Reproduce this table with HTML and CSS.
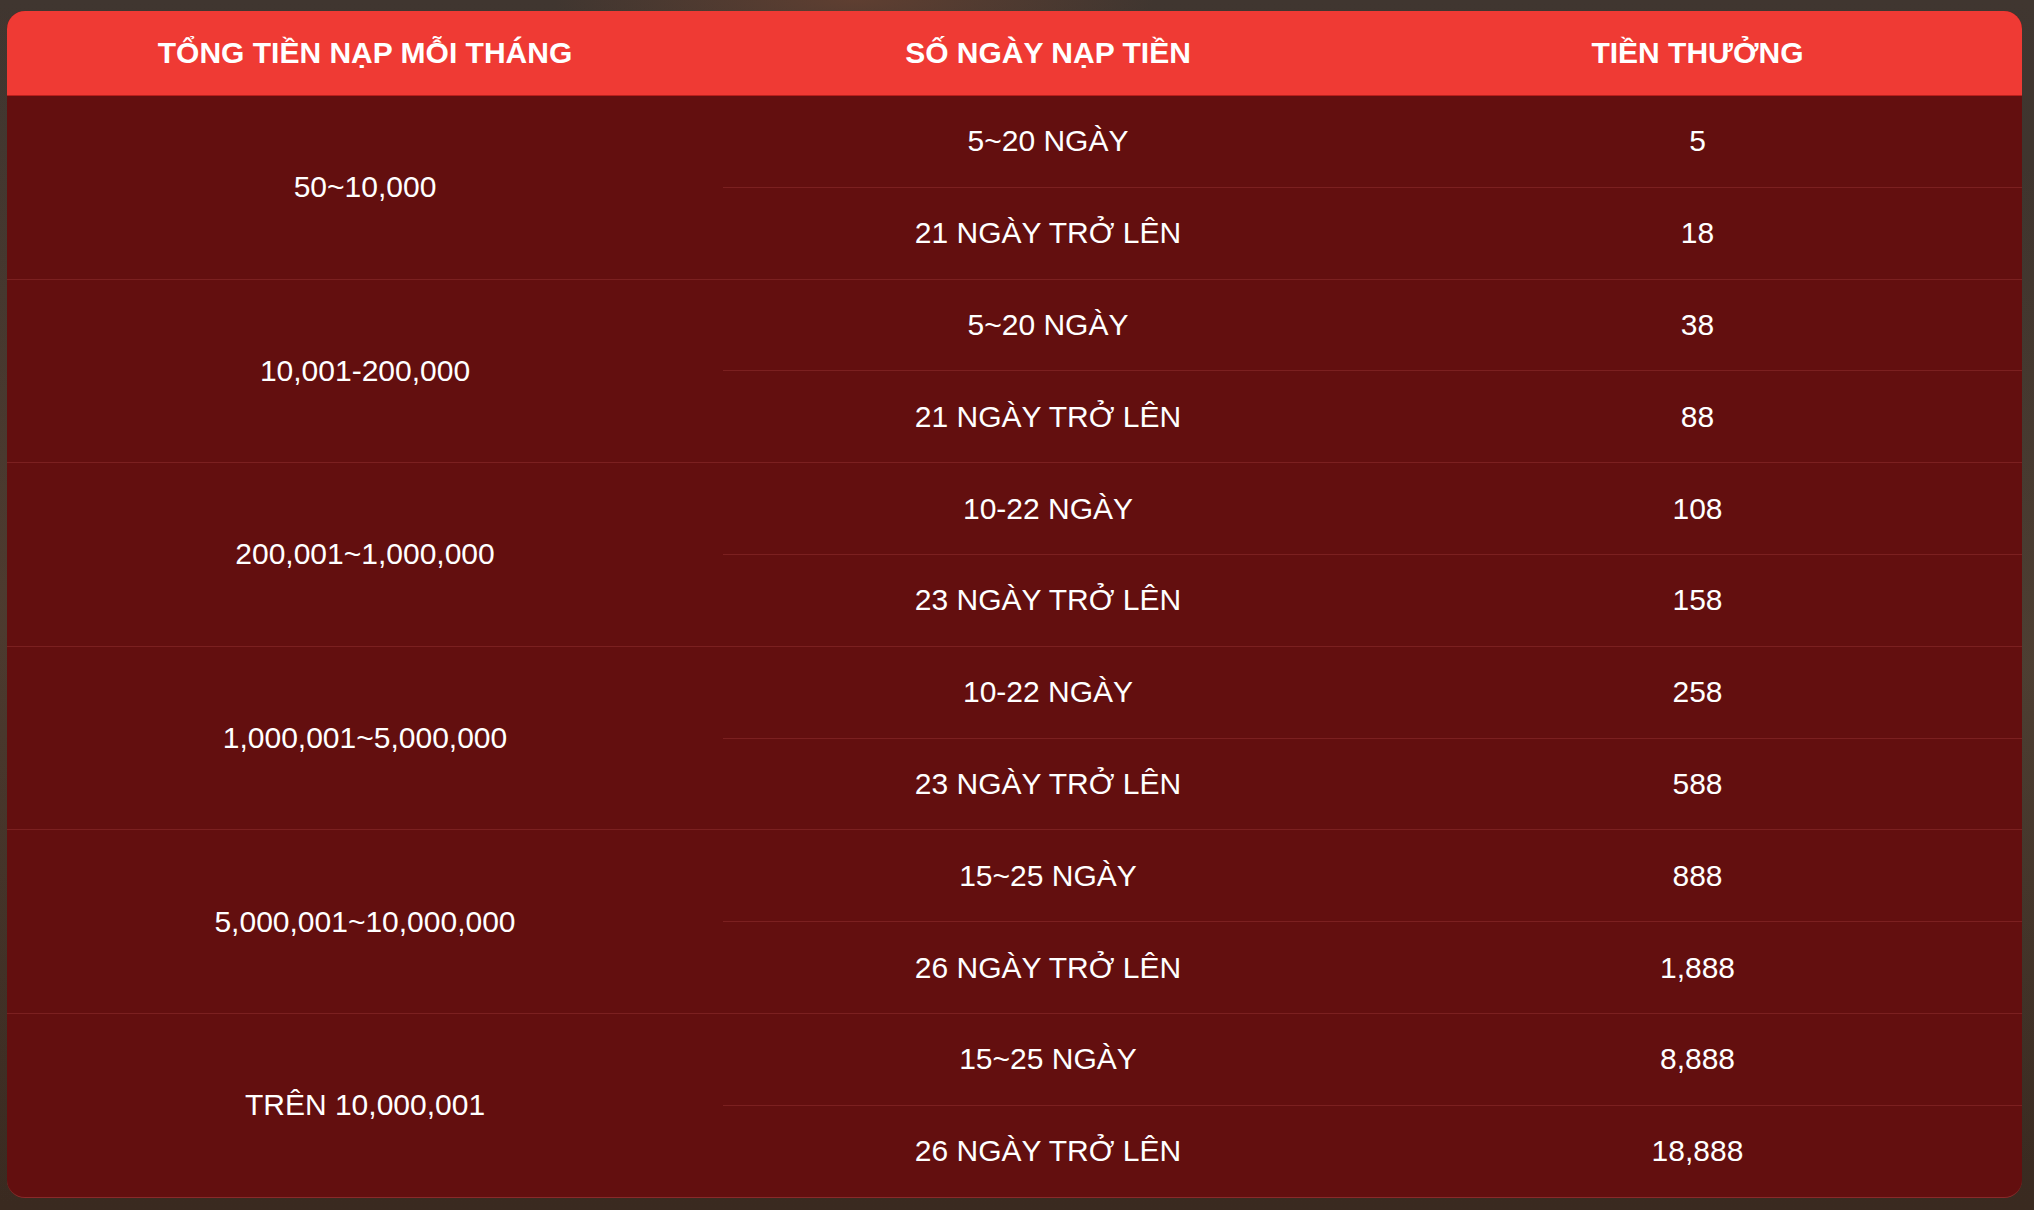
FILE: index.html
```html
<!DOCTYPE html>
<html>

<head>
	<meta name="viewport" content="width=device-width, initial-scale=1" />
	<title>Tiền thưởng nạp tiền</title>
	<link rel="stylesheet" href="styles.css">
</head>

<body>
	<div class="wrap">
		<table class="bonus">
			<colgroup>
				<col class="c1">
				<col class="c2">
				<col class="c3">
			</colgroup>
			<thead>
				<tr>
					<th>TỔNG TIỀN NẠP MỖI THÁNG</th>
					<th>SỐ NGÀY NẠP TIỀN</th>
					<th>TIỀN THƯỞNG</th>
				</tr>
			</thead>
			<tbody>
				<tr class="top">
					<td rowspan="2" class="tier">50~10,000</td>
					<td>5~20 NGÀY</td>
					<td>5</td>
				</tr>
				<tr class="end">
					<td>21 NGÀY TRỞ LÊN</td>
					<td>18</td>
				</tr>
				<tr class="top">
					<td rowspan="2" class="tier">10,001-200,000</td>
					<td>5~20 NGÀY</td>
					<td>38</td>
				</tr>
				<tr class="end">
					<td>21 NGÀY TRỞ LÊN</td>
					<td>88</td>
				</tr>
				<tr class="top">
					<td rowspan="2" class="tier">200,001~1,000,000</td>
					<td>10-22 NGÀY</td>
					<td>108</td>
				</tr>
				<tr class="end">
					<td>23 NGÀY TRỞ LÊN</td>
					<td>158</td>
				</tr>
				<tr class="top">
					<td rowspan="2" class="tier">1,000,001~5,000,000</td>
					<td>10-22 NGÀY</td>
					<td>258</td>
				</tr>
				<tr class="end">
					<td>23 NGÀY TRỞ LÊN</td>
					<td>588</td>
				</tr>
				<tr class="top">
					<td rowspan="2" class="tier">5,000,001~10,000,000</td>
					<td>15~25 NGÀY</td>
					<td>888</td>
				</tr>
				<tr class="end">
					<td>26 NGÀY TRỞ LÊN</td>
					<td>1,888</td>
				</tr>
				<tr class="top">
					<td rowspan="2" class="tier">TRÊN 10,000,001</td>
					<td>15~25 NGÀY</td>
					<td>8,888</td>
				</tr>
				<tr class="end last">
					<td>26 NGÀY TRỞ LÊN</td>
					<td>18,888</td>
				</tr>
			</tbody>
		</table>
	</div>
</body>

</html>
```

FILE: styles.css
```css
html, body {
	margin:0;
	height:100%;
}

body {
	font-family:"Liberation Sans", Arial, sans-serif;
	color:#fff;
	background-color:#3d312a;
	background-image:
		radial-gradient(ellipse 300px 60px at 42% 0%, rgba(120,70,50,0.55), transparent),
		radial-gradient(ellipse 400px 500px at 100% 55%, rgba(110,90,70,0.35), transparent),
		radial-gradient(ellipse 300px 600px at 0% 50%, rgba(110,80,60,0.35), transparent),
		linear-gradient(#403630, #3b2e26 60%, #3a2a20);
	overflow:hidden;
}

.wrap {
	padding:11px 12px 0 7px;
}

.bonus {
	width:2015px;
	border-collapse:separate;
	border-spacing:0;
	table-layout:fixed;
	background-color:#630f0f;
	border-radius:18px;
	overflow:hidden;
	font-size:30px;
	text-align:center;
	border-bottom:1px solid #8a2a2a;
}

.c1 { width:716px; }
.c2 { width:650px; }
.c3 { width:649px; }

.bonus th {
	background-color:#ef3a34;
	font-weight:bold;
	height:84px;
	padding:0;
	border-bottom:1px solid #b8201c;
	vertical-align:middle;
}

.bonus td {
	height:90.8px;
	padding:0;
	vertical-align:middle;
	border-bottom:1px solid #7b2020;
}

.bonus .last td,
.bonus tr:last-child .tier {
	border-bottom:0;
}

.bonus tr.top:nth-last-child(2) .tier {
	border-bottom:0;
}
```
